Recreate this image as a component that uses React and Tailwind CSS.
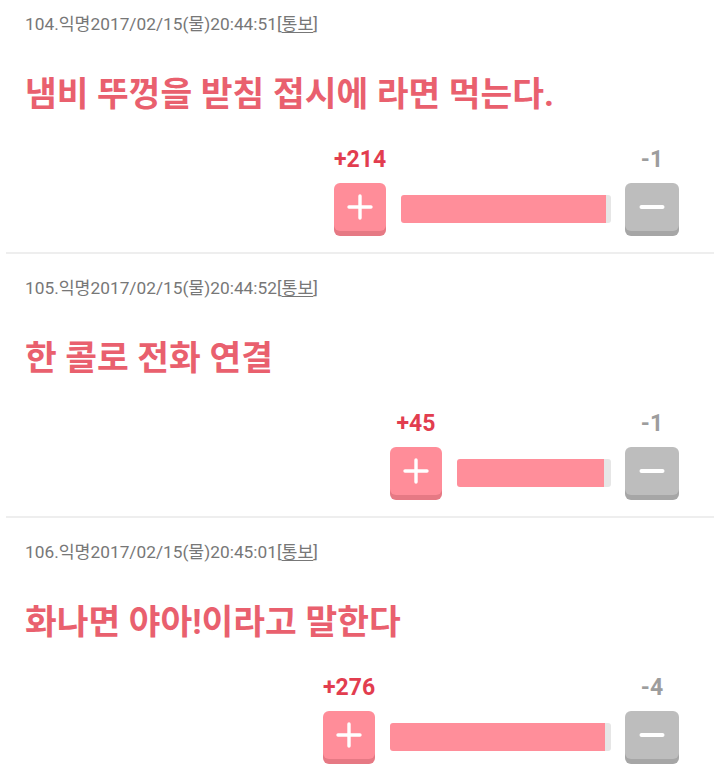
import React from "react";

const posts = [
  { no: 104, time: "2017/02/15(물)20:44:51", title: "냄비 뚜껑을 받침 접시에 라면 먹는다.", up: 214, down: 1, bar: 210, tail: 5 },
  { no: 105, time: "2017/02/15(물)20:44:52", title: "한 콜로 전화 연결", up: 45, down: 1, bar: 154, tail: 7 },
  { no: 106, time: "2017/02/15(물)20:45:01", title: "화나면 야아!이라고 말한다", up: 276, down: 4, bar: 221, tail: 6 },
];

function PlusIcon() {
  return (
    <svg width="26" height="26" viewBox="0 0 26 26">
      <path d="M13 2v22M2 13h22" stroke="#fff" strokeWidth="3.4" strokeLinecap="round" />
    </svg>
  );
}

function MinusIcon() {
  return (
    <svg width="26" height="26" viewBox="0 0 26 26">
      <path d="M2.5 13h21" stroke="#fff" strokeWidth="4" strokeLinecap="round" />
    </svg>
  );
}

function VoteBox({ up, down, bar, tail }) {
  return (
    <div className="flex justify-end pr-[35px]">
      <div className="flex flex-col">
        <div className="flex items-end justify-between h-[28px]">
          <span className="w-[52px] text-center text-[23px] font-bold leading-[28px] text-[#e23d4f] whitespace-nowrap">+{up}</span>
          <span className="w-[54px] text-center text-[23px] font-bold leading-[28px] text-[#9d9d9d]">-{down}</span>
        </div>
        <div className="flex items-start mt-[9px] pb-[5px]">
          <button className="w-[52px] h-[48px] rounded-[6px] bg-[#ff8d99] shadow-[0_5px_0_#e67984] flex items-center justify-center">
            <PlusIcon />
          </button>
          <div className="ml-[15px] mt-[12px] flex h-[28px] rounded-[3px] overflow-hidden" style={{ width: bar }}>
            <div className="flex-1 bg-[#ff8e9a]" />
            <div className="bg-[#e6e6e6]" style={{ width: tail }} />
          </div>
          <button className="ml-[14px] w-[54px] h-[48px] rounded-[6px] bg-[#bdbdbd] shadow-[0_5px_0_#a6a6a6] flex items-center justify-center">
            <MinusIcon />
          </button>
        </div>
      </div>
    </div>
  );
}

function Post({ post }) {
  return (
    <div className="mx-[6px] border-b-2 border-[#eeeeee] pt-[22px] pb-[16px]">
      <div className="px-[19px] text-[17.3px] leading-[24px] text-[#777777]">
        {post.no}.익명{post.time}[<span className="underline underline-offset-2">통보</span>]
      </div>
      <h2 className="mt-[36px] px-[19px] text-[34.5px] font-bold leading-[44px] text-[#e9606e]">{post.title}</h2>
      <div className="mt-[30px]">
        <VoteBox up={post.up} down={post.down} bar={post.bar} tail={post.tail} />
      </div>
    </div>
  );
}

export default function App() {
  return (
    <div className="w-[720px] h-[769px] overflow-hidden bg-white" style={{ fontFamily: 'Roboto, "Noto Sans CJK KR", sans-serif' }}>
      <div className="-mt-[10px]">
        {posts.map((p) => (
          <Post key={p.no} post={p} />
        ))}
      </div>
    </div>
  );
}
